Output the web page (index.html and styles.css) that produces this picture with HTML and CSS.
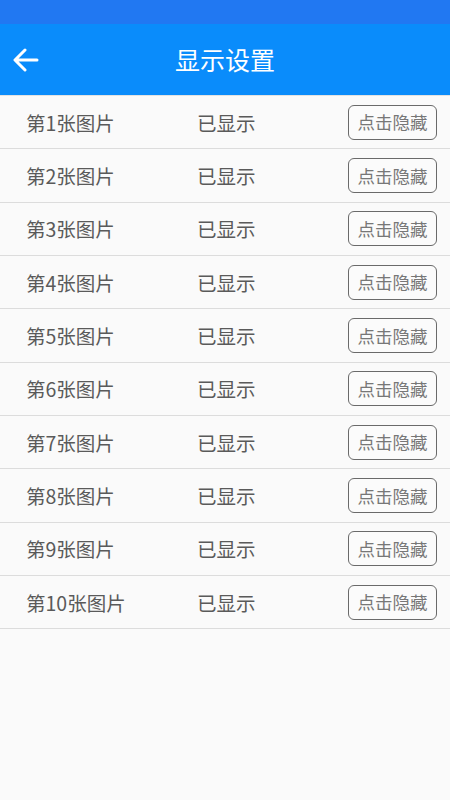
FILE: index.html
```html
<!DOCTYPE html>
<html lang="zh-CN">
<head>
    <meta charset="UTF-8">
    <meta name="viewport" content="width=device-width, initial-scale=1.0">
    <title>显示设置</title>
    <link rel="stylesheet" href="styles.css">
</head>
<body>
    <div class="status-bar"></div>

    <!-- Шапка -->
    <div class="header">
        <span class="back">
            <svg width="26" height="24" viewBox="0 0 26 24">
                <path d="M24 12H3M12 2L2 12l10 10" fill="none" stroke="#fff" stroke-width="3" stroke-linecap="round" stroke-linejoin="round"/>
            </svg>
        </span>
        <h1>显示设置</h1>
    </div>

    <ul class="list">
        <li class="row"><span class="name">第1张图片</span><span class="state">已显示</span><button>点击隐藏</button></li>
        <li class="row"><span class="name">第2张图片</span><span class="state">已显示</span><button>点击隐藏</button></li>
        <li class="row"><span class="name">第3张图片</span><span class="state">已显示</span><button>点击隐藏</button></li>
        <li class="row"><span class="name">第4张图片</span><span class="state">已显示</span><button>点击隐藏</button></li>
        <li class="row"><span class="name">第5张图片</span><span class="state">已显示</span><button>点击隐藏</button></li>
        <li class="row"><span class="name">第6张图片</span><span class="state">已显示</span><button>点击隐藏</button></li>
        <li class="row"><span class="name">第7张图片</span><span class="state">已显示</span><button>点击隐藏</button></li>
        <li class="row"><span class="name">第8张图片</span><span class="state">已显示</span><button>点击隐藏</button></li>
        <li class="row"><span class="name">第9张图片</span><span class="state">已显示</span><button>点击隐藏</button></li>
        <li class="row"><span class="name">第10张图片</span><span class="state">已显示</span><button>点击隐藏</button></li>
    </ul>
</body>
</html>
```

FILE: styles.css
```css
body {
    font-family: "Noto Sans CJK SC", "Noto Sans", sans-serif;
    background-color: #fafafa;
    margin: 0;
    height: 800px;
}

.status-bar {
    height: 24px;
    background-color: #2178f2;
}

.header {
    height: 71px;
    background-color: #0a8cfb;
    display: flex;
    align-items: center;
    justify-content: center;
    position: relative;
}

.back {
    position: absolute;
    left: 13px;
    top: 24px;
    display: flex;
}

h1 {
    margin: 0;
    font-size: 25px;
    font-weight: normal;
    color: #fff;
    line-height: 1;
}

.list {
    list-style: none;
    margin: 0;
    padding: 0;
    border-top: 1px solid #e3e3e3;
}

.row {
    display: flex;
    align-items: center;
    height: 53.33px;
    box-sizing: border-box;
    border-bottom: 1px solid #dcdcdc;
    padding: 0 13px 0 26px;
    color: #5a5a5a;
    font-size: 19.5px;
}

.name {
    width: 171px;
}

.state {
    flex: 1;
}

button {
    width: 89px;
    height: 35px;
    background-color: #fbfbfb;
    border: 1px solid #6a6a6a;
    border-radius: 6px;
    color: #777;
    font-family: inherit;
    font-size: 17.5px;
    padding: 0;
    line-height: 1;
}
```
